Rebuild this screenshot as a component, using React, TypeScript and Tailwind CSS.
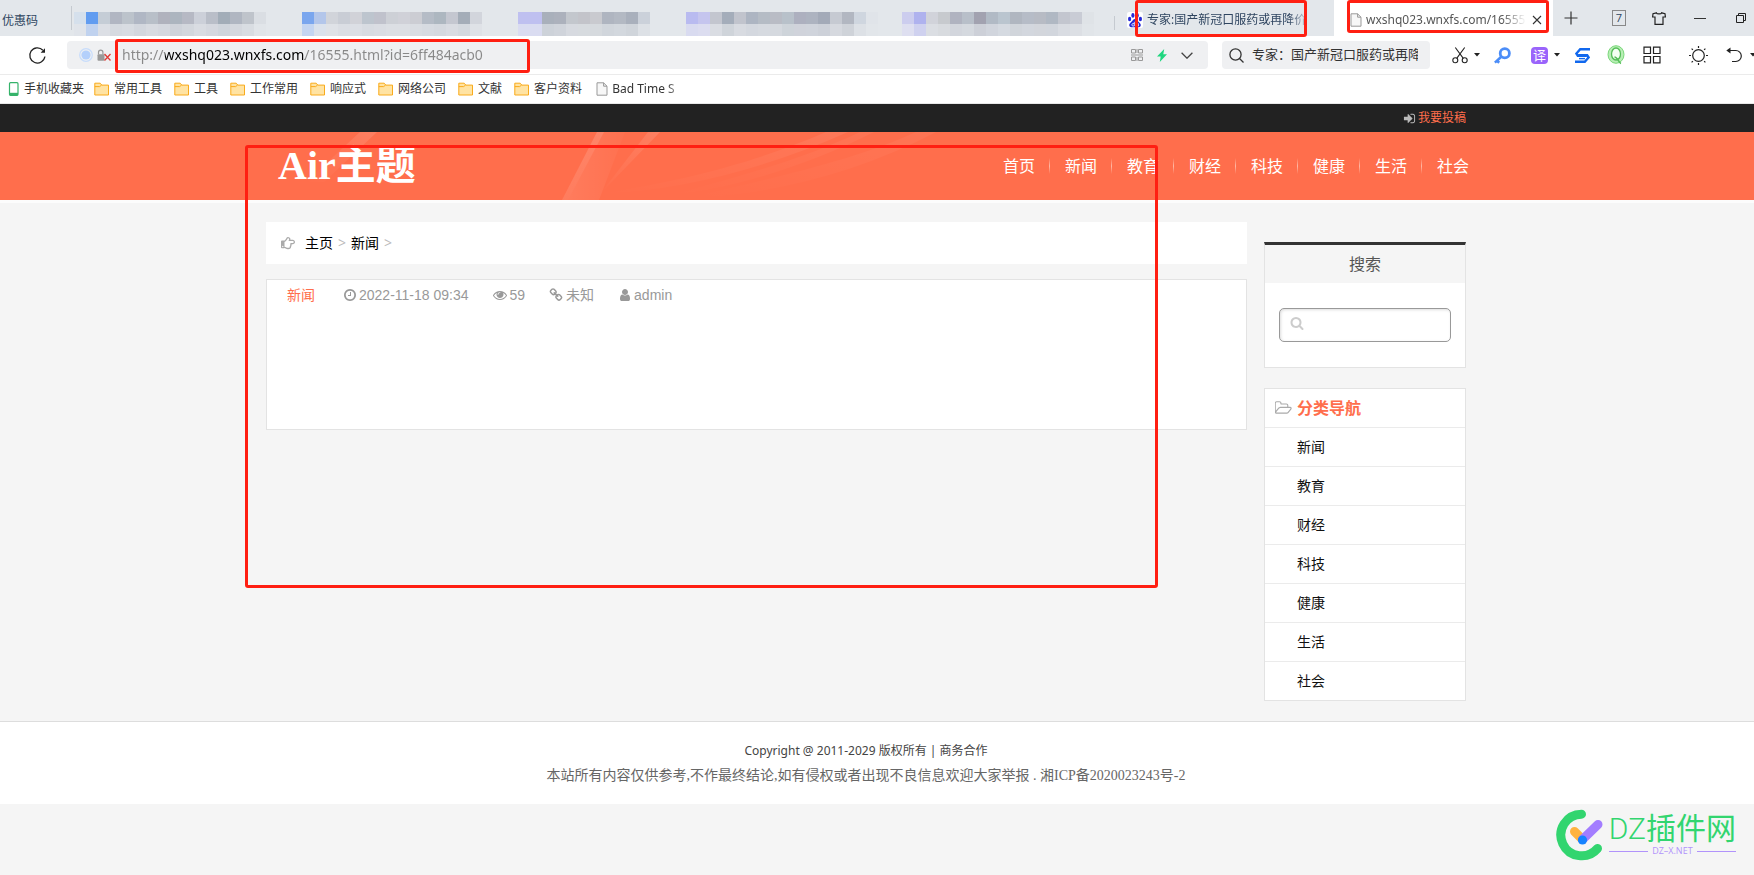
import React from 'react';
import { FaRegHandPointRight } from 'react-icons/fa';

const categories = ['新闻', '教育', '财经', '科技', '健康', '生活', '社会'];
const navItems = ['首页', ...categories];
const bookmarks = ['常用工具', '工具', '工作常用', '响应式', '网络公司', '文献', '客户资料'];

// Pixelated titles of the background tabs, one colour per cell
const blurredTabs = [
  {
    name: '标签 1',
    top: ['#d5e0ec', '#619cf0', '#c5cdd6', '#b1b6c2', '#bcc3cb', '#b0b7c4', '#b8bfc8', '#b0b2bd', '#acb5bf', '#b6b9c4', '#ccd0d9', '#b9bec8', '#a2adb8', '#b0b6c1', '#bfc4cb', '#dadee3', '#e3e7eb'],
    bottom: ['#e0e4ea', '#c0d2ef', '#dcdfe5', '#d6dae0', '#d8dce2', '#d3d7de', '#d8dbe1', '#d5d8df', '#cfd3da', '#d3d7dd', '#d9dce2', '#d5d8df', '#cfd5dc', '#d5d8de', '#d9dde2', '#e1e5e9', '#e3e7eb'],
  },
  {
    name: '标签 2',
    top: ['#7aa6ee', '#b3c6ea', '#d1d4da', '#c9cdd5', '#d1d2d8', '#bdc5ce', '#c0c2cc', '#cdd0d6', '#d0d1d8', '#cccdd3', '#b5bcc6', '#adb7c0', '#c4c7d0', '#a4adb8', '#d2d5dc', '#e3e7eb'],
    bottom: ['#c4d5f1', '#dbe2ec', '#dfe2e7', '#dbdee4', '#dcdfe5', '#d8dce2', '#dadde3', '#dcdfe4', '#dcdfe4', '#dadde2', '#d7dbe1', '#d5d9df', '#d9dce2', '#d4d9df', '#dfe2e7', '#e3e7eb'],
  },
  {
    name: '标签 3',
    top: ['#bfc0f0', '#bfc0f0', '#a9b0bb', '#acb1bc', '#c3c7cd', '#c3c4ca', '#c9cacf', '#afb5c0', '#b3b9c3', '#a9b0bc', '#cbd1da', '#e3e7eb'],
    bottom: ['#dadcf1', '#dadcf1', '#cdd2d9', '#d0d4db', '#d7dae0', '#d7dbdf', '#d6dade', '#d1d6dc', '#d3d8de', '#d0d5db', '#dde1e6', '#e3e7eb'],
  },
  {
    name: '标签 4',
    top: ['#b9bbf0', '#c5c5ee', '#c3c6cf', '#a4adba', '#c1c4cd', '#adb5c2', '#b5bcc5', '#b9bcc5', '#b8c1ca', '#adb0bf', '#adb3c0', '#a3aab8', '#c6cad2', '#b2b7c1', '#cfd6df', '#e0e4e9'],
    bottom: ['#d9dbf0', '#dcddf0', '#dadde3', '#cfd4da', '#d8dbe1', '#d4d8df', '#d6dae0', '#d5d9df', '#ced4da', '#d0d3db', '#d0d4dc', '#cdd1d9', '#d6d9df', '#cfd3d9', '#dde1e6', '#e2e6ea'],
  },
  {
    name: '标签 5',
    top: ['#cccdee', '#afb2ee', '#d1d3da', '#c7cace', '#b0b3c0', '#b8bfc9', '#a2a2b0', '#b1bac5', '#bac5cf', '#b0b6c0', '#b6bcc7', '#b7bbc4', '#b0b8c3', '#c3c6cf', '#c9ccd5', '#dfe3e7', '#e3e7eb'],
    bottom: ['#dedff0', '#cfd1ef', '#dbdee3', '#d8dbdf', '#d3d6dd', '#d5d9df', '#cdd0d8', '#d1d5dd', '#d5dae1', '#d1d5db', '#d3d7de', '#d3d6dc', '#d2d6dd', '#d9dce2', '#dcdfe4', '#e1e5e9', '#e3e7eb'],
  },
];

const faPaths = {
  signIn: 'M1312 896q0 26-19 45l-544 544q-19 19-45 19t-45-19-19-45v-288h-448q-26 0-45-19t-19-45v-384q0-26 19-45t45-19h448v-288q0-26 19-45t45-19 45 19l544 544q19 19 19 45zm352-352v704q0 119-84.5 203.5t-203.5 84.5h-320q-13 0-22.5-9.5t-9.5-22.5q0-4-1-20t-.5-26.5 3-23.5 10-19.5 20.5-6.5h320q66 0 113-47t47-113v-704q0-66-47-113t-113-47h-312l-11.5-1-11.5-3-8-5.5-7-9-2-13.5q0-4-1-20t-.5-26.5 3-23.5 10-19.5 20.5-6.5h320q119 0 203.5 84.5t84.5 203.5z',
  clock: 'M1024 544v448q0 14-9 23t-23 9h-320q-14 0-23-9t-9-23v-64q0-14 9-23t23-9h224v-352q0-14 9-23t23-9h64q14 0 23 9t9 23zm416 352q0-148-73-273t-198-198-273-73-273 73-198 198-73 273 73 273 198 198 273 73 273-73 198-198 73-273zm224 0q0 209-103 385.5t-279.5 279.5-385.5 103-385.5-103-279.5-279.5-103-385.5 103-385.5 279.5-279.5 385.5-103 385.5 103 279.5 279.5 103 385.5z',
  eye: 'M1664 960q-152-236-381-353 61 104 61 225 0 185-131.5 316.5t-316.5 131.5-316.5-131.5-131.5-316.5q0-121 61-225-229 117-381 353 133 205 333.5 326.5t434.5 121.5 434.5-121.5 333.5-326.5zm-720-384q0-20-14-34t-34-14q-125 0-214.5 89.5t-89.5 214.5q0 20 14 34t34 14 34-14 14-34q0-86 61-147t147-61q20 0 34-14t14-34zm848 384q0 34-20 69-140 230-376.5 368.5t-499.5 138.5-499.5-139-376.5-368q-20-35-20-69t20-69q140-229 376.5-368t499.5-139 499.5 139 376.5 368q20 35 20 69z',
  link: 'M1520 1216q0-40-28-68l-208-208q-28-28-68-28-42 0-72 32 3 3 19 18.5t21.5 21.5 15 19 13 25.5 3.5 27.5q0 40-28 68t-68 28q-15 0-27.5-3.5t-25.5-13-19-15-21.5-21.5-18.5-19q-33 31-33 73 0 40 28 68l206 207q27 27 68 27 40 0 68-26l147-146q28-28 28-67zm-703-705q0-40-28-68l-206-207q-28-28-68-28-39 0-68 27l-147 146q-28 28-28 67 0 40 28 68l208 208q27 27 68 27 42 0 72-31-3-3-19-18.5t-21.5-21.5-15-19-13-25.5-3.5-27.5q0-40 28-68t68-28q15 0 27.5 3.5t25.5 13 19 15 21.5 21.5 18.5 19q33-31 33-73zm895 705q0 120-85 203l-147 146q-83 83-203 83-121 0-204-85l-206-207q-83-83-83-203 0-123 88-209l-88-88q-86 88-208 88-120 0-204-84l-208-208q-84-84-84-204t85-203l147-146q83-83 203-83 121 0 204 85l206 207q83 83 83 203 0 123-88 209l88 88q86-88 208-88 120 0 204 84l208 208q84 84 84 204z',
  user: 'M1536 1399q0 109-62.5 187t-150.5 78h-854q-88 0-150.5-78t-62.5-187q0-85 8.5-160.5t31.5-152 58.5-131 94-89 134.5-34.5q131 128 313 128t313-128q76 0 134.5 34.5t94 89 58.5 131 31.5 152 8.5 160.5zm-256-887q0 159-112.5 271.5t-271.5 112.5-271.5-112.5-112.5-271.5 112.5-271.5 271.5-112.5 271.5 112.5 112.5 271.5z',
  search: 'M1216 832q0-185-131.5-316.5t-316.5-131.5-316.5 131.5-131.5 316.5 131.5 316.5 316.5 131.5 316.5-131.5 131.5-316.5zm512 832q0 52-38 90t-90 38q-54 0-90-38l-343-342q-179 124-399 124-143 0-273.5-55.5t-225-150-150-225-55.5-273.5 55.5-273.5 150-225 225-150 273.5-55.5 273.5 55.5 225 150 150 225 55.5 273.5q0 220-124 399l343 343q37 37 37 90z',
  folderOpen: 'M1845 931q0-35-53-35h-1088q-40 0-85.5 21.5t-71.5 52.5l-294 363q-18 24-18 40 0 35 53 35h1088q40 0 86-22t71-53l294-363q18-22 18-39zm-1141-163h768v-160q0-40-28-68t-68-28h-576q-40 0-68-28t-28-68v-64q0-40-28-68t-68-28h-320q-40 0-68 28t-28 68v853l256-315q44-53 116-87.5t140-34.5zm1269 163q0 62-46 120l-295 363q-43 53-116 87.5t-140 34.5h-1088q-92 0-158-66t-66-158v-960q0-92 66-158t158-66h320q92 0 158 66t66 158v32h544q92 0 158 66t66 158v160h192q54 0 99 24.5t67 70.5q15 32 15 68z',
};

interface FaIconProps {
  name: keyof typeof faPaths;
  className: string;
  viewBox?: string;
}

const FaIcon: React.FC<FaIconProps> = ({ name, className, viewBox = '0 0 1792 1792' }) => (
  <svg viewBox={viewBox} fill="currentColor" className={`shrink-0 ${className}`} aria-hidden="true">
    <path d={faPaths[name]} />
  </svg>
);

const Folder = () => (
  <svg viewBox="0 0 16 14" className="h-3.5 w-4 shrink-0" fill="#ffe3a3" stroke="#f9ab1c">
    <path d="M.8 13V1.2h5.4l1.6 1.9h6.7V13z" />
    <path d="M.8 4.6h4.8l2-1.5" fill="none" />
  </svg>
);

const PageIcon = ({ className }: { className: string }) => (
  <svg viewBox="0 0 12 14" className={`shrink-0 ${className}`} fill="#f7f7f7" stroke="#999">
    <path d="M1 .8h6.6L11 4.2v9H1z" />
    <path d="M7.6.8v3.4H11" fill="none" />
  </svg>
);

const Caret = () => (
  <svg viewBox="0 0 6 4" className="h-1 w-1.5 shrink-0" fill="#222">
    <path d="M0 0h6L3 3.6z" />
  </svg>
);

const BaiduPaw = () => (
  <svg viewBox="0 0 16 16" className="h-4 w-4 shrink-0" fill="#2529d8">
    <rect width="16" height="16" rx="2" fill="#fff" />
    <ellipse cx="2.6" cy="7" rx="1.6" ry="2.2" />
    <ellipse cx="5.9" cy="3.4" rx="1.6" ry="2.4" />
    <ellipse cx="10.2" cy="3.4" rx="1.6" ry="2.4" />
    <ellipse cx="13.4" cy="7" rx="1.6" ry="2.2" />
    <path d="M8 7C6 7 5.500 9 4 10.200C2.500 11.400 2 12.500 2.300 13.800C2.800 15.800 5 15.300 8 15.300C11 15.300 13.200 15.800 13.700 13.800C14 12.500 13.500 11.400 12 10.200C10.500 9 10 7 8 7z" />
    <path d="M7.300 9.800v4.200H6a1 1 0 0 1 0-2.400h1.300M9.200 11.300v2q0 .7.7.7h1.500v-2.700" fill="none" stroke="#fff" strokeWidth=".8" />
  </svg>
);

const TabStrip = () => (
  <div className="flex h-9 bg-[#e3e7eb] text-xs text-[#2f4560]">
    <button className="w-[71px] shrink-0 pl-0.5 pt-1.5 text-left">优惠码</button>
    <span className="mt-1.5 h-6 w-px shrink-0 bg-[#c5cad0]" />
    <div className="ml-0.5 flex flex-1 gap-6 pt-3">
      {blurredTabs.map((tab) => (
        <button key={tab.name} aria-label={tab.name} className="shrink-0">
          <span className="flex">
            {tab.top.map((color, i) => (
              <span key={i} className="h-3 w-3" style={{ background: color }} />
            ))}
          </span>
          <span className="flex">
            {tab.bottom.map((color, i) => (
              <span key={i} className="h-3 w-3" style={{ background: color }} />
            ))}
          </span>
        </button>
      ))}
    </div>
    <div className="flex shrink-0">
      <span className="mt-4 h-3.5 w-px bg-[#c5cad0]" />
      <div className="relative w-[219px]">
        <button className="flex h-full w-full items-center gap-1 pl-3 pt-1">
          <BaiduPaw />
          <span className="w-[164px] overflow-hidden whitespace-nowrap text-left [mask-image:linear-gradient(to_right,black_86%,transparent)]">
            专家:国产新冠口服药或再降价
          </span>
        </button>
        <div className="pointer-events-none absolute left-5 top-0 h-[37px] w-[172px] rounded-[3px] border-3 border-[#ff1f12]" />
      </div>
      <div className="relative flex w-[219px] items-center bg-white pl-4 pt-1">
        <PageIcon className="mr-1 h-3.5 w-3" />
        <button className="w-[160px] overflow-hidden whitespace-nowrap text-left font-['Noto_Sans',sans-serif] text-xs text-[#555] [mask-image:linear-gradient(to_right,black_85%,transparent)]">
          wxshq023.wnxfs.com/16555
        </button>
        <button aria-label="关闭标签页" className="ml-1.5">
          <svg viewBox="0 0 10 10" className="h-2.5 w-2.5" stroke="#333" strokeWidth="1.1">
            <path d="M1 1l8 8M9 1L1 9" />
          </svg>
        </button>
        <div className="pointer-events-none absolute left-[13px] top-0 h-[33px] w-[202px] rounded-[3px] border-3 border-[#ff1f12]" />
      </div>
      <div className="flex w-[201px] items-center overflow-hidden pl-[11px]">
        <button aria-label="新建标签页">
          <svg viewBox="0 0 14 14" className="h-3.5 w-3.5" stroke="#333" strokeWidth="1.2">
            <path d="M7 .5v13M.5 7h13" />
          </svg>
        </button>
        <button className="ml-[34px] h-4 w-3.5 border border-[#888] text-[11px] leading-3.5">7</button>
        <button aria-label="皮肤" className="ml-[26px]">
          <svg viewBox="0 0 14 13" className="h-[13px] w-3.5" fill="none" stroke="#222" strokeWidth="1.2">
            <path d="M4.400.8 1 1.700.600 5h2.400v7.300h8V5h2.400L13 1.700 9.600.8C9.200 2.300 4.800 2.300 4.400.8z" />
          </svg>
        </button>
        <button aria-label="最小化" className="ml-7 py-2">
          <span className="block h-px w-3 bg-[#333]" />
        </button>
        <button aria-label="还原" className="ml-[30px]">
          <svg viewBox="0 0 10 10" className="h-2.5 w-2.5" fill="none" stroke="#222">
            <path d="M.5 2.500h7v7h-7zM2.500 2.500v-2h7v7h-2" />
          </svg>
        </button>
      </div>
    </div>
  </div>
);

const Toolbar = () => (
  <div className="flex h-[39px] items-center border-b border-[#ebebeb] bg-white">
    <button aria-label="刷新" className="ml-7 mr-5 shrink-0">
      <svg viewBox="0 0 19 19" className="h-[19px] w-[19px]" fill="none" stroke="#222" strokeWidth="1.300">
        <path d="M16.900 10.500a7.600 7.600 0 1 1-2-6.300" />
        <path d="M17 2.300v4.400h-4.400z" fill="#222" stroke="none" />
      </svg>
    </button>
    <div className="relative flex h-7 flex-1 items-center rounded bg-[#eff0f2] pl-3 pr-[15px]">
      <svg viewBox="0 0 14 14" className="h-3.5 w-3.5 shrink-0">
        <circle cx="7" cy="7" r="6.300" fill="none" stroke="#c7dcfb" strokeWidth="1.200" />
        <circle cx="7" cy="7" r="4.600" fill="#b4d0fb" />
      </svg>
      <svg viewBox="0 0 15 13" className="ml-1 h-[13px] w-[15px] shrink-0" fill="none">
        <path d="M1.500 5.500V3.300a2.200 2.200 0 0 1 4.400 0v2.200" stroke="#999" strokeWidth="1.200" />
        <rect x=".5" y="5.200" width="7" height="6.500" rx="1" fill="#999" />
        <path d="M7.500 5l6 6.500M13.500 5l-6 6.500" stroke="#e03a35" strokeWidth="1.300" />
      </svg>
      <input
        aria-label="地址栏"
        defaultValue="http://wxshq023.wnxfs.com/16555.html?id=6ff484acb0"
        className="ml-2.5 min-w-0 flex-1 bg-[linear-gradient(to_right,#888_43px,#000_43px,#000_183px,#888_183px)] bg-clip-text font-['Noto_Sans',sans-serif] text-sm text-transparent outline-none"
      />
      <div className="flex items-center gap-3.5">
        <button aria-label="二维码">
          <svg viewBox="0 0 12 12" className="h-3 w-3" fill="none" stroke="#999">
            <path d="M.5.5h4v3.500h-4zM7.500.5h4v3.500h-4zM.5 8h4v3.500h-4zM7.500 8h4v3.500h-4zM0 6h12M6 0v4M6 8v4" />
          </svg>
        </button>
        <button aria-label="极速模式">
          <svg viewBox="0 0 10 13" className="h-[13px] w-2.5" fill="#1fd67f">
            <path d="M7.200 0 0 7.500h3.700L2.800 13 10 5.300H6.300z" />
          </svg>
        </button>
        <button aria-label="展开">
          <svg viewBox="0 0 12 7" className="h-[7px] w-3" fill="none" stroke="#444" strokeWidth="1.300">
            <path d="M.6.8 6 6.200 11.400.8" />
          </svg>
        </button>
      </div>
      <div className="pointer-events-none absolute -top-0.5 left-12 h-[34px] w-[415px] rounded-[3px] border-3 border-[#ff1f12]" />
    </div>
    <div className="ml-3.5 flex h-7 w-[208px] shrink-0 items-center rounded bg-[#eff0f2] pl-[7px] pr-3">
      <svg viewBox="0 0 15 15" className="h-[15px] w-[15px] shrink-0" fill="none" stroke="#333" strokeWidth="1.300">
        <circle cx="6.500" cy="6.500" r="5.600" />
        <path d="m10.500 10.500 4 4" />
      </svg>
      <input
        aria-label="搜索栏"
        defaultValue="专家：国产新冠口服药或再降"
        className="ml-2 min-w-0 flex-1 text-[13px] text-[#333] outline-none"
      />
    </div>
    <div className="flex w-[324px] shrink-0 items-center overflow-hidden pl-[22px]">
      <button aria-label="截图" className="flex items-center gap-1.5">
        <svg viewBox="0 0 16 17" className="h-[17px] w-4" fill="none" stroke="#222" strokeWidth="1.100">
          <circle cx="3.300" cy="13.300" r="2.500" />
          <circle cx="12.700" cy="13.300" r="2.500" />
          <path d="M3.300.5l8 10.800M12.700.5l-8 10.800" />
        </svg>
        <Caret />
      </button>
      <button aria-label="密码" className="ml-3.5">
        <svg viewBox="0 0 17 17" className="h-[17px] w-[17px]" fill="none" stroke="#4b8df8">
          <circle cx="10.800" cy="6.300" r="4.600" strokeWidth="2.800" />
          <path d="M7 10 .9 15.600M2.800 13.500l2.400 2.300" strokeWidth="2.600" />
        </svg>
      </button>
      <button className="ml-5 flex items-center gap-1.5">
        <span className="h-[17px] w-[17px] rounded-sm bg-[#9a64fb] text-[13px] leading-4 text-white">译</span>
        <Caret />
      </button>
      <button aria-label="搜狗" className="ml-3.5">
        <svg viewBox="0 0 17 17" className="h-[17px] w-[17px]" fill="none" stroke="#1168ee" strokeWidth="2.400">
          <path d="M16 2.200H6.200L2.400 6.500l1.400 2.200h9" />
          <path d="M1 14.800h9.800l3.800-4.300-1.400-2.200h-9" />
          <path d="M5 11.600h6" strokeWidth="1.400" />
        </svg>
      </button>
      <button aria-label="QQ" className="ml-4">
        <svg viewBox="0 0 18 20" className="h-5 w-[18px]" fill="none">
          <ellipse cx="9" cy="9.500" rx="8" ry="8.800" fill="#b8eeb5" stroke="#79d779" />
          <ellipse cx="9" cy="9" rx="4.500" ry="6" fill="#f4fff3" stroke="#55bd58" strokeWidth="1.300" />
          <path d="M7.500 12c3 0 4 5.500 6.500 6.500" stroke="#55bd58" strokeWidth="1.600" />
        </svg>
      </button>
      <button aria-label="应用" className="ml-[18px]">
        <svg viewBox="0 0 18 18" className="h-[18px] w-[18px]" fill="none" stroke="#222" strokeWidth="1.200">
          <path d="M1 1.200h6.500v6.300H1zM10.500 1.200H17v6.300h-6.500zM1 10.500h6.500v6.300H1zM10.500 10.500H17v6.300h-6.500z" />
        </svg>
      </button>
      <span className="ml-3.5 h-4 w-px bg-[#d5d5d5]" />
      <button aria-label="夜间模式" className="ml-3.5">
        <svg viewBox="0 0 19 19" className="h-[19px] w-[19px]" fill="none" stroke="#222" strokeWidth="1.200">
          <circle cx="9.500" cy="9.500" r="5.800" />
          <path d="M9.500 0v2M9.500 17v2M0 9.500h2M17 9.500h2M2.600 2.600l1.300 1.300M15.100 15.100l1.300 1.300M16.400 2.600l-1.300 1.300M3.900 15.100l-1.300 1.300" />
        </svg>
      </button>
      <button aria-label="恢复" className="ml-[18px] flex items-center gap-2">
        <svg viewBox="0 0 16 16" className="h-4 w-4" fill="none" stroke="#222" strokeWidth="1.200">
          <path d="M1.500 3.500h8.300a5.500 5.500 0 0 1 0 11H6" />
          <path d="M4.500.500v6L.3 3.500z" fill="#222" stroke="none" />
        </svg>
        <Caret />
      </button>
    </div>
  </div>
);

const BookmarkBar = () => (
  <div className="flex h-[29px] items-center border-b border-[#e8e8e8] bg-white text-xs text-[#333]">
    <a href="#mobile" className="ml-2 mr-2.5 flex items-center gap-1">
      <svg viewBox="0 0 12 14" className="h-3.5 w-3">
        <rect x="1.500" y=".7" width="8.500" height="12.600" rx="1" fill="#fff" stroke="#35b36a" strokeWidth="1.200" />
        <path d="M1.500 10.800H10v2.500H1.500z" fill="#35b36a" />
      </svg>
      手机收藏夹
    </a>
    <div className="flex gap-3">
      {bookmarks.map((name) => (
        <a key={name} href="#bookmark" className="flex items-center gap-1">
          <Folder />
          {name}
        </a>
      ))}
      <a href="#bookmark" className="ml-0.5 flex items-center gap-1 font-['Noto_Sans',sans-serif]">
        <PageIcon className="h-3.5 w-3" />
        <span className="w-[72px] overflow-hidden whitespace-nowrap [mask-image:linear-gradient(to_right,black_76%,transparent)]">Bad Time S</span>
      </a>
    </div>
  </div>
);

const Header = () => (
  <header>
    <div className="bg-[#222] pr-[22px]">
      <div className="mx-auto flex h-7 max-w-[1200px] items-center justify-end text-xs">
        <a href="#submit" className="flex items-center gap-0.5 text-[#ff6e4c]">
          <FaIcon name="signIn" className="h-[13px] w-[13px] text-[#bbb]" />
          我要投稿
        </a>
      </div>
    </div>
    <div className="relative bg-[#ff6e4c] pr-[22px] shadow-[0_3px_0_#fcfcfc]">
      {/* light streaks behind the logo */}
      <svg viewBox="0 0 1000 68" className="pointer-events-none absolute left-[266px] top-0 h-[68px] w-[1000px]">
        <defs>
          <linearGradient id="ray" x1="0" y1="0" x2="1" y2="0">
            <stop offset="0" stopColor="#fff" stopOpacity=".1" />
            <stop offset="1" stopColor="#fff" stopOpacity=".02" />
          </linearGradient>
          <linearGradient id="streak" x1="1" y1="0" x2="0" y2="1">
            <stop offset="0" stopColor="#fff" stopOpacity=".12" />
            <stop offset="1" stopColor="#fff" stopOpacity="0" />
          </linearGradient>
        </defs>
        <path d="M94 0h17L58 50H40z" fill="url(#streak)" />
        <path d="M331 0h28l-26 68h-37z" fill="url(#ray)" />
        <path d="M331 0h7l-36 68h-6z" fill="url(#streak)" />
        <path d="M382 0h12L334 62z" fill="url(#streak)" />
        <path d="M560 0h22C500 36 420 58 332 62 430 47 500 26 560 0z" fill="url(#streak)" opacity=".6" />
        <path d="M594 0h14C540 34 470 56 400 64 470 46 540 26 594 0z" fill="url(#streak)" opacity=".4" />
        <path d="M650 0h20C590 42 500 64 420 66 500 48 590 28 650 0z" fill="url(#streak)" opacity=".4" />
      </svg>
      <div className="relative mx-auto flex h-[68px] max-w-[1206px] items-center justify-between pl-[15px]">
        <a href="#home" className="font-['Liberation_Serif','Noto_Sans_CJK_SC',serif] text-[40px] leading-none font-bold text-white">
          Air主题
        </a>
        <nav className="flex items-center text-base text-white">
          {navItems.map((item, i) => (
            <React.Fragment key={item}>
              {i > 0 && <span className="mx-3.5 flex h-4 w-0.5"><span className="w-px bg-[linear-gradient(to_bottom,transparent,#ffb9a5,transparent)]" /></span>}
              <a href={`#nav-${i}`}>{item}</a>
            </React.Fragment>
          ))}
        </nav>
      </div>
    </div>
  </header>
);

const Article = () => (
  <div className="min-w-0 flex-1">
    <div className="flex h-[42px] items-center bg-white pl-[15px] text-sm text-black">
      <FaRegHandPointRight className="mr-2.5 h-3.5 w-3.5 text-[#aaa]" />
      <a href="#home">主页</a>
      <span className="mx-[5px] text-[#bbb]">&gt;</span>
      <a href="#news">新闻</a>
      <span className="mx-[5px] text-[#bbb]">&gt;</span>
    </div>
    <article className="mt-[15px] h-[151px] border border-[#e3e3e3] bg-white px-5 pt-[3px] text-[#999]">
      <div className="flex items-center gap-6 font-['Liberation_Sans','Noto_Sans_CJK_SC',sans-serif] text-sm leading-6">
        <a href="#news" className="mr-1 text-[#ff6e4c]">新闻</a>
        <span className="flex items-center gap-0.5"><FaIcon name="clock" className="h-3.5 w-3.5" />2022-11-18 09:34</span>
        <span className="flex items-center gap-[3px]"><FaIcon name="eye" className="h-3.5 w-3.5" />59</span>
        <span className="flex items-center gap-[3px]"><FaIcon name="link" className="h-3.5 w-3.5" />未知</span>
        <span className="flex items-center gap-0.5"><FaIcon name="user" className="h-3.5 w-3.5" />admin</span>
      </div>
    </article>
  </div>
);

const Sidebar = () => (
  <aside className="mt-5 w-[202px] shrink-0">
    <section className="h-[126px] border border-t-3 border-[#e3e3e3] border-t-[#333] bg-white">
      <h3 className="bg-[#f5f5f5] text-center text-base leading-[38px] text-[#555]">
        <label htmlFor="site-search">搜索</label>
      </h3>
      <div className="relative mx-3.5 mt-[25px]">
        <FaIcon name="search" className="absolute left-[11px] top-2 h-3.5 w-3.5 text-[#ccc]" />
        <input id="site-search" type="text" className="h-[34px] w-full rounded-[5px] border border-[#999] pl-8 text-sm shadow-[inset_1px_1px_3px_#ddd] outline-none" />
      </div>
    </section>
    <section className="mt-5 border border-[#e3e3e3] bg-white">
      <h3 className="flex h-[38px] items-center gap-[5px] pl-2.5 text-base font-bold text-[#ff6e4c]">
        <FaIcon name="folderOpen" viewBox="128 0 1856 1792" className="h-4 w-[17px] text-[#aaa]" />
        分类导航
      </h3>
      <ul>
        {categories.map((name, i) => (
          <li key={name} className="border-t border-[#ebebeb]">
            <a href={`#category-${i}`} className="block pl-8 text-sm leading-[38px] text-[#111]">{name}</a>
          </li>
        ))}
      </ul>
    </section>
  </aside>
);

const Watermark = () => (
  <div className="pointer-events-none absolute right-[18px] bottom-3.5 flex items-center gap-1">
    <svg viewBox="0 0 50 52" className="h-[52px] w-[50px]" fill="none" strokeLinecap="round" strokeWidth="9">
      <path d="M26.500 5.200A20.800 20.800 0 1 0 42.500 39.500" stroke="#32d56f" />
      <path d="M19.500 22.500l8 8" stroke="#ffb340" />
      <path d="M27.500 30.500l15.500-15" stroke="#a37dff" />
      <circle cx="27.500" cy="31" r="4.600" fill="#1683ff" />
    </svg>
    <div>
      <div className="font-['Roboto','Noto_Sans_CJK_SC',sans-serif] text-[30px] leading-8 text-[#32d56f]">
        <span className="font-light">DZ</span>插件网
      </div>
      <div className="flex items-center gap-1 text-[9px] leading-3 text-[#b193fb]">
        <span className="h-px flex-1 bg-[#b193fb]" />
        DZ–X.NET
        <span className="h-px flex-1 bg-[#b193fb]" />
      </div>
    </div>
  </div>
);

const App = () => (
  <div className="relative min-h-screen overflow-hidden bg-[#f5f5f5] font-['Open_Sans','Noto_Sans_CJK_SC',sans-serif]">
    <TabStrip />
    <Toolbar />
    <BookmarkBar />
    <Header />
    <main className="pr-[22px]">
      <div className="mx-auto flex max-w-[1200px] items-start gap-[17px] pt-[22px] pb-5">
        <Article />
        <Sidebar />
      </div>
    </main>
    <footer className="border-t border-[#ddd] bg-white pt-[17px] pr-[22px] pb-4 text-center">
      <p className="font-['Noto_Sans','Noto_Sans_CJK_SC',sans-serif] text-xs leading-6 text-[#444]">Copyright @ 2011-2029 版权所有 | <a href="#cooperation">商务合作</a></p>
      <p className="font-['Liberation_Serif','Noto_Sans_CJK_SC',serif] text-sm leading-[25px] text-[#666]">
        本站所有内容仅供参考,不作最终结论,如有侵权或者出现不良信息欢迎大家举报 . <a href="#icp">湘ICP备2020023243号-2</a>
      </p>
    </footer>
    <Watermark />
    <div className="pointer-events-none absolute left-[245px] top-[145px] h-[443px] w-[913px] rounded-[3px] border-3 border-[#ff1f12]" />
  </div>
);

export default App;
